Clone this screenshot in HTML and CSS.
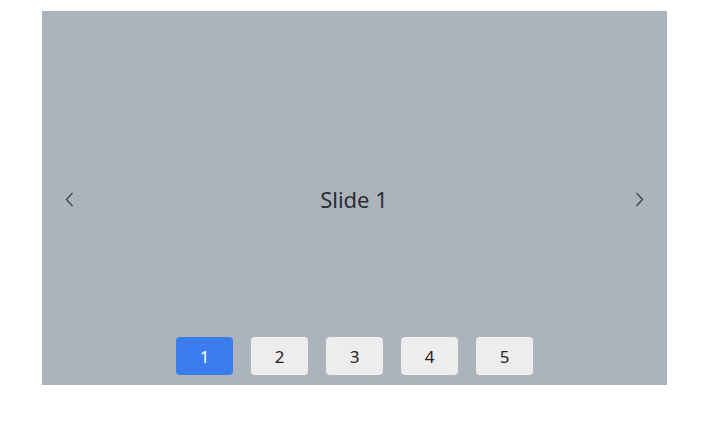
FILE: index.html
```html
<!DOCTYPE html>
<html lang="en">
<head>
    <meta charset="UTF-8">
    <meta name="viewport" content="width=device-width, initial-scale=1.0">
    <title>Carousel</title>
    <link rel="stylesheet" href="styles.css">
</head>
<body>

<div class="carousel">
    <div class="slide-row">
        <button class="arrow" type="button" aria-label="Previous">
            <svg width="9" height="15" viewBox="0 0 9 15"><path d="M7.5 1 L1.5 7.5 L7.5 14" fill="none" stroke="#3d434b" stroke-width="1.3"/></svg>
        </button>
        <div class="slide">Slide 1</div>
        <button class="arrow" type="button" aria-label="Next">
            <svg width="9" height="15" viewBox="0 0 9 15"><path d="M1.5 1 L7.5 7.5 L1.5 14" fill="none" stroke="#3d434b" stroke-width="1.3"/></svg>
        </button>
    </div>

    <!-- page buttons sit over the bottom of the slide -->
    <div class="pager">
        <button class="page active" type="button">1</button>
        <button class="page" type="button">2</button>
        <button class="page" type="button">3</button>
        <button class="page" type="button">4</button>
        <button class="page" type="button">5</button>
    </div>
</div>

</body>
</html>
```

FILE: styles.css
```css
body {
    font-family: "Noto Sans", "Open Sans", sans-serif;
    margin: 0;
    padding: 11px 0 0 42px;
    background-color: #fff;
    color: #222;
}
.carousel {
    position: relative;
    width: 625px;
    height: 374px;
    background-color: #adb3bb;
}
.slide-row {
    height: 100%;
    display: flex;
    align-items: center;
    padding: 2px 21px 0 20px;
    box-sizing: border-box;
}
.arrow {
    background: none;
    border: none;
    padding: 0;
    width: 14px;
    height: 20px;
    display: flex;
    align-items: center;
    justify-content: center;
    cursor: pointer;
}
.slide {
    flex: 1;
    text-align: center;
    font-size: 22px;
    color: #2a2f35;
}
.pager {
    position: absolute;
    left: 0;
    right: 0;
    bottom: 10px;
    display: flex;
    justify-content: center;
    gap: 18px;
}
.page {
    width: 57px;
    height: 38px;
    border: none;
    border-radius: 4px;
    background-color: #ededed;
    color: #222;
    font-family: inherit;
    font-size: 17px;
    cursor: pointer;
}
.page.active {
    background-color: #3b7dec;
    color: #fff;
}
```
